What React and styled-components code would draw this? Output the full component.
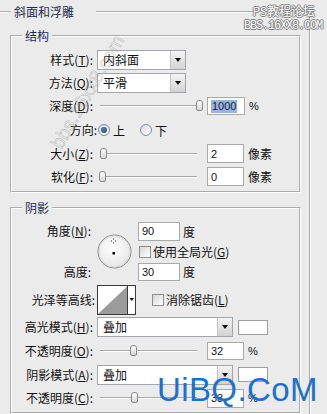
import React from 'react';
import styled, { createGlobalStyle, css } from 'styled-components';

const CJK = `"Noto Sans CJK SC", "Noto Sans", sans-serif`;
const NUM = `"Liberation Sans", Arial, sans-serif`;

const Global = createGlobalStyle`
  html, body { margin: 0; padding: 0; background: #ebebeb; }
  body { font-family: ${CJK}; font-size: 12px; color: #111; }
`;

const Page = styled.div`
  position: relative;
  width: 327px;
  height: 414px;
  overflow: hidden;
  background: #ebebeb;
`;

const Group = styled.fieldset`
  margin: 0;
  min-inline-size: 0;
  box-sizing: border-box;
  border: 2px groove #fff;
`;

const OuterGroup = styled(Group)`
  margin: 5px 0 0 -6px;
  width: 317px;
  height: 430px;
  padding: 5px 0 0 14px;
`;

const InnerGroup = styled(Group)`
  width: 291px;
  padding: ${p => p.$pt}px 0 3px 0;
  margin-top: ${p => p.$mt}px;
`;

const Legend = styled.legend`
  margin-left: ${p => p.$ml}px;
  padding: 0 ${p => p.$pr}px 0 3px;
  line-height: 14px;
  font-size: 12px;
  color: #1f2c4e;
`;

const Row = styled.div`
  display: flex;
  align-items: center;
  height: ${p => p.$h}px;
  margin-top: ${p => p.$mt ?? 0}px;
`;

const Label = styled.span`
  width: ${p => p.$w ?? 81}px;
  margin-right: ${p => p.$gap ?? 4}px;
  text-align: right;
  white-space: nowrap;
  line-height: 14px;
  flex: none;
`;

const Select = styled.div`
  width: ${p => p.$w}px;
  height: 20px;
  box-sizing: border-box;
  border: 1px solid #a3a7ad;
  background: #fff;
  display: flex;
  align-items: stretch;
  flex: none;
`;

const SelectText = styled.span`
  flex: 1;
  padding-left: 5px;
  line-height: 18px;
`;

const DropButton = styled.span`
  width: 14px;
  border-left: 1px solid #c4c4c4;
  background: linear-gradient(#f4f4f4, #d2d2d2);
  display: flex;
  align-items: center;
  justify-content: center;
  &::after {
    content: '';
    border-left: 3.5px solid transparent;
    border-right: 3.5px solid transparent;
    border-top: 4px solid #111;
  }
`;

const SliderBox = styled.div`
  position: relative;
  width: 106px;
  height: 14px;
  margin-right: 4px;
  flex: none;
  &::before {
    content: '';
    position: absolute;
    left: 3px;
    right: 6px;
    top: 6px;
    border-top: 1px solid #a8a8a8;
    border-bottom: 1px solid #fff;
  }
`;

const Thumb = styled.span`
  position: absolute;
  top: 1px;
  width: 7px;
  height: 11px;
  box-sizing: border-box;
  border: 1px solid #8a8a8a;
  border-radius: 3px 3px 2px 2px;
  background: linear-gradient(#fdfdfd, #d6d6d6);
`;

const Field = styled.div`
  width: ${p => p.$w}px;
  height: ${p => p.$h ?? 19}px;
  box-sizing: border-box;
  border: 1px solid #a9a9a9;
  background: #fff;
  display: flex;
  align-items: center;
  padding-left: 3px;
  font-family: ${NUM};
  font-size: 11px;
  color: #111;
  flex: none;
`;

const Highlight = styled.span`
  background: #98b4e0;
  color: #1a1f40;
  padding: 0 1px;
  line-height: 13px;
`;

const Unit = styled.span`
  margin-left: ${p => p.$ml ?? 4}px;
  font-family: ${p => (p.$num ? NUM : CJK)};
  font-size: ${p => (p.$num ? 11 : 12)}px;
`;

const Radio = styled.span`
  width: 12px;
  height: 12px;
  box-sizing: border-box;
  border-radius: 50%;
  border: 1px solid #7d8ea3;
  background: linear-gradient(135deg, #d9d9d9, #fff);
  display: inline-flex;
  align-items: center;
  justify-content: center;
  margin-left: ${p => p.$ml ?? 0}px;
  flex: none;
  ${p => p.$checked && css`
    &::after {
      content: '';
      width: 6px;
      height: 6px;
      border-radius: 50%;
      background: radial-gradient(circle at 40% 40%, #5c7fb6, #1c3b72);
    }
  `}
`;

const OptText = styled.span`
  margin-left: 3px;
`;

const Check = styled.span`
  width: 12px;
  height: 12px;
  box-sizing: border-box;
  border: 1px solid #8e8e8e;
  background: linear-gradient(135deg, #d6d6d6, #fff);
  margin-left: ${p => p.$ml ?? 0}px;
  flex: none;
`;

const CheckText = styled.span`
  margin-left: 2px;
  white-space: nowrap;
`;

const AngleBlock = styled.div`
  display: grid;
  grid-template-columns: 79px 35px auto;
  grid-template-rows: 20px 21px 19px;
  column-gap: 6px;
  align-items: center;
`;

const GridLabel = styled.span`
  grid-column: 1;
  grid-row: ${p => p.$row};
  text-align: right;
  white-space: nowrap;
  line-height: 14px;
`;

const DialCell = styled.div`
  grid-column: 2;
  grid-row: 1 / 4;
  width: 35px;
  height: 35px;
  align-self: center;
  margin-top: 1px;
`;

const Cell = styled.div`
  grid-column: 3;
  grid-row: ${p => p.$row};
  display: flex;
  align-items: center;
`;

const Swatch = styled.div`
  width: 30px;
  height: 15px;
  box-sizing: border-box;
  border: 1px solid #9e9e9e;
  background: #fff;
  margin-left: 5px;
  flex: none;
`;

const ContourBox = styled.div`
  width: 39px;
  height: 30px;
  flex: none;
`;

const WatermarkTop = styled.div`
  position: absolute;
  right: 5px;
  top: 4px;
  display: flex;
  flex-direction: column;
  align-items: flex-end;
  color: #fff;
  text-shadow: 1px 0 #7d7d7d, -1px 0 #7d7d7d, 0 1px #7d7d7d, 0 -1px #7d7d7d;
`;

const WmLine1 = styled.span`
  font-family: ${CJK};
  font-size: 12px;
  line-height: 14px;
  margin-right: 7px;
`;

const WmLine2 = styled.span`
  font-family: "Liberation Mono", monospace;
  font-size: 12px;
  line-height: 10px;
  margin-top: 3px;
  letter-spacing: -1.2px;
`;

const DiagonalMark = styled.div`
  position: absolute;
  left: 24px;
  top: 81px;
  transform: rotate(-60deg);
  transform-origin: 50% 50%;
  font-family: ${NUM};
  font-size: 19px;
  line-height: 22px;
  color: transparent;
  -webkit-text-stroke: 0.6px rgba(150, 150, 150, 0.5);
  white-space: nowrap;
`;

const BrandMark = styled.div`
  position: absolute;
  left: 157px;
  top: 373px;
  font-family: ${NUM};
  font-size: 33px;
  line-height: 33px;
  letter-spacing: 0.4px;
  color: #1c6fd3;
  white-space: nowrap;
`;

function Slider({ value, max }) {
  const left = 2 + (value / max) * 97;
  return (
    <SliderBox>
      <Thumb style={{ left }} />
    </SliderBox>
  );
}

function Dropdown({ w, text }) {
  return (
    <Select $w={w}>
      <SelectText>{text}</SelectText>
      <DropButton />
    </Select>
  );
}

function Dial() {
  return (
    <DialCell>
      <svg width="35" height="35" viewBox="0 0 35 35">
        <defs>
          <radialGradient id="dialg" cx="45%" cy="40%" r="60%">
            <stop offset="0%" stopColor="#ffffff" />
            <stop offset="100%" stopColor="#e6e6e6" />
          </radialGradient>
        </defs>
        <circle cx="17.5" cy="17.5" r="16.5" fill="url(#dialg)" stroke="#8c8c8c" strokeWidth="1" />
        <circle cx="17.5" cy="17.5" r="15.5" fill="none" stroke="#d8d8d8" strokeWidth="1" />
        <path d="M16.5 4.5v1M16.5 8.5v1M14 7h1M18 7h1" stroke="#333" strokeWidth="1" />
        <rect x="15.5" y="18" width="2.5" height="2.5" fill="#000" />
      </svg>
    </DialCell>
  );
}

function Contour() {
  return (
    <ContourBox>
      <svg width="39" height="30" viewBox="0 0 39 30">
        <rect x="0.5" y="0.5" width="38" height="29" fill="#fff" stroke="#3a3a3a" />
        <polygon points="1,29 30.5,1 30.5,29" fill="#9b9b9b" />
        <line x1="30.5" y1="1" x2="30.5" y2="29" stroke="#3a3a3a" />
        <polygon points="32.5,13 37,13 34.75,16" fill="#111" />
      </svg>
    </ContourBox>
  );
}

export default function App() {
  return (
    <>
      <Global />
      <Page>
        <OuterGroup>
          <Legend $ml={1} $pr={22}>斜面和浮雕</Legend>

          <InnerGroup $mt={5} $pt={5}>
            <Legend $ml={10} $pr={3}>结构</Legend>
            <Row $h={23}>
              <Label>样式(<u>T</u>):</Label>
              <Dropdown w={89} text="内斜面" />
            </Row>
            <Row $h={23}>
              <Label>方法(<u>Q</u>):</Label>
              <Dropdown w={89} text="平滑" />
            </Row>
            <Row $h={24}>
              <Label>深度(<u>D</u>):</Label>
              <Slider value={1000} max={1000} />
              <Field $w={38} $h={18}><Highlight>1000</Highlight></Field>
              <Unit $num>%</Unit>
            </Row>
            <Row $h={24}>
              <Label $w={85} $gap={1}>方向:</Label>
              <Radio $checked />
              <OptText>上</OptText>
              <Radio $ml={15} />
              <OptText>下</OptText>
            </Row>
            <Row $h={23}>
              <Label>大小(<u>Z</u>):</Label>
              <Slider value={2} max={250} />
              <Field $w={37}>2</Field>
              <Unit>像素</Unit>
            </Row>
            <Row $h={23}>
              <Label>软化(<u>F</u>):</Label>
              <Slider value={0} max={16} />
              <Field $w={37}>0</Field>
              <Unit>像素</Unit>
            </Row>
          </InnerGroup>

          <InnerGroup $mt={8} $pt={6}>
            <Legend $ml={10} $pr={3}>阴影</Legend>
            <AngleBlock>
              <GridLabel $row={1}>角度(<u>N</u>):</GridLabel>
              <Dial />
              <Cell $row={1}>
                <Field $w={42} $h={19}>90</Field>
                <Unit $ml={3}>度</Unit>
              </Cell>
              <Cell $row={2}>
                <Check $ml={1} />
                <CheckText>使用全局光(<u>G</u>)</CheckText>
              </Cell>
              <GridLabel $row={3}>高度:</GridLabel>
              <Cell $row={3}>
                <Field $w={42} $h={18}>30</Field>
                <Unit $ml={3}>度</Unit>
              </Cell>
            </AngleBlock>
            <Row $h={31} $mt={3}>
              <Label $w={83} $gap={2}>光泽等高线:</Label>
              <Contour />
              <Check $ml={16} />
              <CheckText>消除锯齿(<u>L</u>)</CheckText>
            </Row>
            <Row $h={24}>
              <Label>高光模式(<u>H</u>):</Label>
              <Dropdown w={136} text="叠加" />
              <Swatch />
            </Row>
            <Row $h={23}>
              <Label>不透明度(<u>O</u>):</Label>
              <Slider value={32} max={100} />
              <Field $w={37} $h={18}>32</Field>
              <Unit $num>%</Unit>
            </Row>
            <Row $h={25}>
              <Label>阴影模式(<u>A</u>):</Label>
              <Dropdown w={136} text="叠加" />
              <Swatch />
            </Row>
            <Row $h={22}>
              <Label>不透明度(<u>C</u>):</Label>
              <Slider value={33} max={100} />
              <Field $w={37} $h={19}>33</Field>
              <Unit $num>%</Unit>
            </Row>
          </InnerGroup>
        </OuterGroup>

        <DiagonalMark>bbs.16xx8.com</DiagonalMark>
        <WatermarkTop>
          <WmLine1>PS教程论坛</WmLine1>
          <WmLine2>BBS.16XX8.COM</WmLine2>
        </WatermarkTop>
        <BrandMark>UiBQ.CoM</BrandMark>
      </Page>
    </>
  );
}
